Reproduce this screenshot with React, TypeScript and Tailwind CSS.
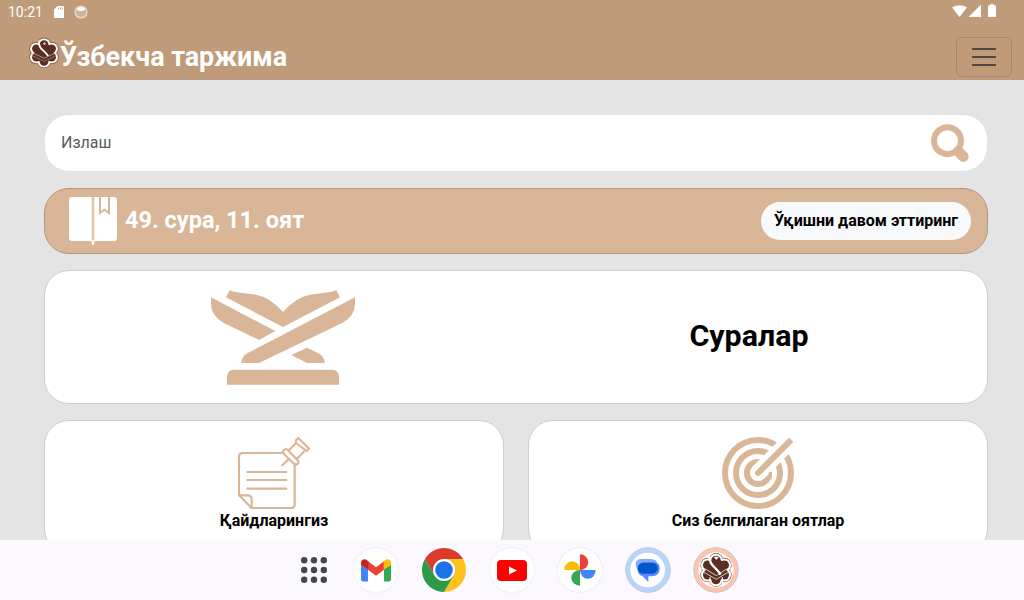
import React from "react";

const lobes = [0, 60, 120, 180, 240, 300].map((deg) => {
  const a = (deg * Math.PI) / 180;
  return { cx: 52 + 29 * Math.sin(a), cy: 52 - 29 * Math.cos(a) };
});

function Rosette({ grow, fill }: { grow: number; fill: string }) {
  return (
    <g fill={fill}>
      {lobes.map((l, i) => (
        <circle key={i} {...l} r={21 + grow} />
      ))}
      <circle cx="52" cy="52" r="32" />
    </g>
  );
}

function HeaderLogo() {
  return (
    <svg className="h-8 w-8" viewBox="-1 -3 106 110" preserveAspectRatio="none">
      <Rosette grow={3} fill="#8c6450" />
      <Rosette grow={0} fill="#fff" />
      <Rosette grow={-6.5} fill="#5b2e22" />
      <path d="M36 12C32 36 52 42 66 62" fill="none" stroke="#fff" strokeWidth="6" />
      <path d="M48 19L54 15L59 19L54 25Z" fill="#d8c5be" />
      <path d="M10 50L53 70L94 50" fill="none" stroke="#cbb5ac" strokeWidth="2.500" />
      <path d="M14 62L53 81L90 62" fill="none" stroke="#a88a80" strokeWidth="2.500" />
    </svg>
  );
}

function StatusBar() {
  return (
    <div className="flex h-6 items-center pl-2 pr-[26px] text-white">
      <span className="w-[46px] text-sm leading-6">10:21</span>
      <svg className="h-3 w-[10px]" viewBox="0 0 10 12">
        <path d="M3.5 0H9.2Q10 0 10 .8V12H0V3.6Z" fill="#fff" />
        <path d="M4.4 1.4V3.4M6.4 1.4V3.4M8.4 1.4V3.4" stroke="#c09b79" strokeWidth=".9" />
      </svg>
      <svg className="ml-2.5 h-3.5 w-3.5" viewBox="0 0 14 14">
        <circle cx="7" cy="7" r="5.800" fill="#cfb195" stroke="#e6d6c8" strokeWidth="1.600" />
        <path d="M2.500 3.500Q7 .5 11.500 3.500L10 5.500Q7 6.500 4 5.500Z" fill="#fff" />
      </svg>
      <svg className="mb-0.5 ml-auto h-3.5 w-[46px]" viewBox="0 0 46 14">
        <path d="M0 3.600Q7.500 -1.200 15 3.600L7.500 13Z" fill="#fff" />
        <path d="M29 .5V13H16.500Z" fill="#fff" />
        <path d="M38 .2H42V1.200H43Q44 1.200 44 2.200V12Q44 13 43 13H37Q36 13 36 12V2.200Q36 1.200 37 1.200H38Z" fill="#fff" />
      </svg>
    </div>
  );
}

function SearchIcon() {
  return (
    <svg className="h-[38px] w-[38px]" viewBox="93 57 114 114">
      <circle cx="142.500" cy="107" r="40.500" fill="none" stroke="#d9b698" strokeWidth="18" />
      <path d="M175 139L190 155" stroke="#d9b698" strokeWidth="32" strokeLinecap="round" />
    </svg>
  );
}

function BookIcon() {
  return (
    <svg className="h-12 w-12" viewBox="87 276 144 144">
      <rect x="87" y="276" width="144" height="132" rx="10" fill="#fff" />
      <path d="M154 407H164L162 420H156Z" fill="#fff" />
      <path d="M159 276V406" stroke="#e2c5ad" strokeWidth="8" />
      <path d="M180 276V324L193 314L207 324V276" fill="none" stroke="#d9b698" strokeWidth="6" />
    </svg>
  );
}

function StandIcon() {
  return (
    <svg className="ml-1 h-[95px] w-36" viewBox="33 28 432 285" fill="#d9b698">
      <path d="M89 29Q105 36 168 42Q211 50 249 94Q287 50 330 42Q393 36 409 29L420 50L249 139L78 50Z" />
      <path d="M33 50L226 151L177 178L73 128Q33 106 33 68Z" />
      <path d="M465 50V70Q463 108 428 126L177 247H124Q124 228 142 218Z" />
      <path d="M321 201L355 218Q374 228 374 247H321L274 223Z" />
      <path d="M81 312V290Q81 267 102 267H396Q417 267 417 290V312Z" />
    </svg>
  );
}

function NoteIcon() {
  return (
    <svg className="h-[72px] w-[72px]" viewBox="84 66 216 216" fill="none" stroke="#d9b698" strokeWidth="6.500" strokeLinejoin="round" strokeLinecap="round">
      <path d="M217 114H98Q87 114 87 125V241L125 279H243Q254 279 254 268V151" />
      <path d="M87 241H113Q125 241 125 253V279" />
      <path d="M112 171H229M112 195H229M112 221H229" />
      <path d="M217 151L234 134" />
      <path d="M219 108Q225 99 233 105L263 136Q269 142 260 149L252 146L221 116Z" />
      <path d="M237 106L258 84M261 131L283 109" />
      <path d="M258 76L265 69L297 101L290 108L258 84Z" />
    </svg>
  );
}

function TargetIcon() {
  return (
    <svg className="h-[72px] w-[72px]" viewBox="186 66 216 216" fill="none" stroke="#d9b698">
      <g strokeWidth="18">
        <circle cx="294" cy="174" r="99" />
        <circle cx="294" cy="174" r="66" />
        <circle cx="294" cy="174" r="33" />
      </g>
      <path d="M294 174L402 66" stroke="#fff" strokeWidth="50" />
      <path d="M316 199Q326 190 326 172L336 171V188L324 204Z" fill="#d9b698" stroke="none" />
      <circle cx="294" cy="174" r="23" fill="#fff" stroke="none" />
      <path d="M294 174L386 82" stroke="#d9b698" strokeWidth="18" strokeLinecap="round" />
      <path d="M380 76L388 68L400 80L392 88Z" fill="#d9b698" stroke="none" />
    </svg>
  );
}

function DockDisc({ children }: { children: React.ReactNode }) {
  return (
    <div className="flex h-11 w-11 items-center justify-center rounded-full bg-white shadow-[0_0_2px_rgba(0,0,0,0.12)]">
      {children}
    </div>
  );
}

function Dock() {
  return (
    <div className="flex h-[60px] shrink-0 items-center justify-center gap-6 bg-[#fbf8ff] pl-3.5">
      <svg className="mr-[3px] h-[26px] w-[26px]" viewBox="0 0 26 26" fill="#45464f">
        {[3.2, 13, 22.8].map((y) => [3.2, 13, 22.8].map((x) => <circle key={x + "-" + y} cx={x} cy={y} r="3.200" />))}
      </svg>
      <DockDisc>
        <svg className="h-[23px] w-[30px]" viewBox="213 56 90 68">
          <path d="M213 72L234 86V123H219Q213 123 213 117Z" fill="#4285f4" />
          <path d="M303 72L282 86V123H297Q303 123 303 117Z" fill="#34a853" />
          <path d="M234 62L258 80L282 62V88L258 106L234 88Z" fill="#ea4335" />
          <path d="M213 73V68C213 57 224 53 232 60L235 62V88Z" fill="#c5221f" />
          <path d="M303 73V68C303 57 292 53 284 60L281 62V88Z" fill="#fbbc04" />
        </svg>
      </DockDisc>
      <svg className="h-11 w-11" viewBox="0 0 44 44">
        <path d="M2.950 11A22 22 0 0 1 41.050 11H22V22L12.470 27.500Z" fill="#dc3a2d" />
        <path d="M41.050 11A22 22 0 0 1 22 44L31.530 27.500L22 22V11Z" fill="#fcc31e" />
        <path d="M22 44A22 22 0 0 1 2.950 11L12.470 27.500L22 22L31.530 27.500Z" fill="#2c9a48" />
        <circle cx="22" cy="22" r="11" fill="#fff" />
        <circle cx="22" cy="22" r="8.800" fill="#1a73e8" />
      </svg>
      <DockDisc>
        <svg className="h-[21px] w-[30px]" viewBox="0 0 30 21">
          <rect width="30" height="21" rx="4" fill="#f00" />
          <path d="M12 6.500L20 10.500L12 14.500Z" fill="#fff" />
        </svg>
      </DockDisc>
      <DockDisc>
        <svg className="h-8 w-8" viewBox="102 42 96 96">
          <path d="M150 43A25 23.500 0 0 1 150 90Z" fill="#ea4335" />
          <path d="M103 90A23.500 26 0 0 1 150 90Z" fill="#fbbc04" />
          <path d="M150 90A23.500 26 0 0 0 197 90Z" fill="#4285f4" />
          <path d="M150 90A26 23.500 0 0 0 150 137Z" fill="#34a853" />
        </svg>
      </DockDisc>
      <svg className="-mx-px h-[46px] w-[46px]" viewBox="286 21 138 138">
        <circle cx="355" cy="90" r="67" fill="#b8d4fd" stroke="#c9c9ce" strokeWidth="3" />
        <circle cx="354" cy="90" r="52" fill="#fff" />
        <path d="M337 57H364Q383 57 383 76V96H340Q318 94 318 72Q318 57 337 57Z" fill="#83a9fb" />
        <path d="M340 67H372Q390 67 390 86Q390 108 366 109H356V126L339 109Q324 105 324 88Z" fill="#5689fb" />
        <rect x="324" y="68" width="60" height="33" rx="16" fill="#0755cc" />
      </svg>
      <svg className="-mx-px h-[46px] w-[46px]" viewBox="489 21 138 138">
        <circle cx="558" cy="90" r="67" fill="#fcc4ad" stroke="#ccc6c8" strokeWidth="3" />
        <circle cx="558" cy="90" r="53" fill="#fff" />
        <g transform="translate(506 38)">
          <Rosette grow={1} fill="#7d594f" />
          <Rosette grow={-1} fill="#fff" />
          <Rosette grow={-7} fill="#5b2e22" />
          <path d="M33 12C31 38 52 42 66 66" fill="none" stroke="#fff" strokeWidth="7" />
          <path d="M45 12L53 22L61 12Z" fill="#fff" />
          <path d="M4 46L20 49L53 69L84 49L100 46" fill="none" stroke="#fff" strokeWidth="2.200" />
          <path d="M6 58L20 61L53 80L84 61L98 58" fill="none" stroke="#fff" strokeWidth="2.200" />
          <path d="M34 73V94M71 73V94" stroke="#fff" strokeWidth="3" />
        </g>
      </svg>
    </div>
  );
}

export default function App() {
  return (
    <div className="flex h-[600px] w-[1024px] flex-col overflow-hidden bg-[#e4e4e4] font-['Roboto',sans-serif] text-black">
      <header className="h-20 shrink-0 bg-[#c09b79]">
        <StatusBar />
        <nav className="flex h-14 items-start justify-between pl-7 pr-3">
          <div className="flex items-start pt-[13px]">
            <HeaderLogo />
            <h1 className="text-[26.9px] font-bold leading-[40px] text-white">Ўзбекча таржима</h1>
          </div>
          <button className="mt-[13px] flex h-10 w-14 flex-col items-center justify-center gap-1.5 rounded-md border border-[#a98769]">
            <span className="h-0.5 w-6 bg-[#50463f]" />
            <span className="h-0.5 w-6 bg-[#50463f]" />
            <span className="h-0.5 w-6 bg-[#50463f]" />
          </button>
        </nav>
      </header>
      <main className="flex min-h-0 flex-1 flex-col gap-4 overflow-hidden pl-11 pr-9 pt-[34px]">
        <div className="flex h-[58px] shrink-0 items-center justify-between rounded-[25px] border border-[#dee2e6] bg-white pl-4 pr-[18px]">
          <span className="text-base text-[#595c5f]">Излаш</span>
          <SearchIcon />
        </div>
        <div className="flex h-[66px] shrink-0 items-center rounded-[25px] border border-[#b4967d] bg-[#d9b698] pl-6 pr-4">
          <BookIcon />
          <span className="mb-0.5 ml-2 text-[23.5px] font-bold leading-8 text-white">49. сура, 11. оят</span>
          <button className="ml-auto flex h-[38px] w-[210px] items-center justify-center rounded-full bg-[#f8f9fa] text-base font-bold">
            Ўқишни давом эттиринг
          </button>
        </div>
        <div className="grid h-[134px] shrink-0 grid-cols-2 place-items-center rounded-[25px] border border-[#cecece] bg-white pl-0.5 pr-1">
          <StandIcon />
          <span className="mb-0.5 text-[30.4px] font-bold">Суралар</span>
        </div>
        <div className="grid shrink-0 grid-cols-2 gap-6 text-base font-bold">
          <div className="flex h-[134px] flex-col items-center rounded-[25px] border border-[#cecece] bg-white pt-4">
            <NoteIcon />
            <span>Қайдларингиз</span>
          </div>
          <div className="flex h-[134px] flex-col items-center rounded-[25px] border border-[#cecece] bg-white pt-4">
            <TargetIcon />
            <span>Сиз белгилаган оятлар</span>
          </div>
        </div>
      </main>
      <Dock />
    </div>
  );
}
